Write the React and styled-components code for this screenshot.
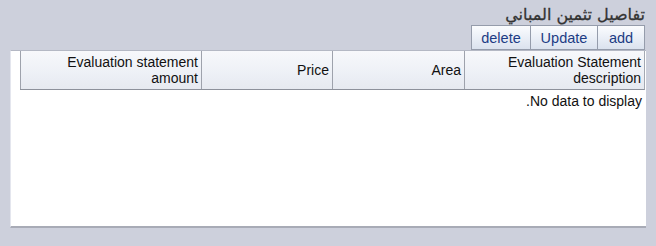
import React from 'react'
import styled, { createGlobalStyle } from 'styled-components'

const GlobalStyle = createGlobalStyle`
    html, body {
        margin: 0;
        padding: 0;
        background: #cdd0dc;
    }
    body {
        font-family: "Liberation Sans", Arial, sans-serif;
    }
`

const Page = styled.div`
    direction: rtl;
    width: 656px;
    height: 246px;
    box-sizing: border-box;
    padding: 4px 10px 0 10px;
    display: flex;
    flex-direction: column;
`

const Title = styled.h1`
    margin: 0;
    height: 21px;
    padding-right: 1px;
    font-family: "DejaVu Sans", sans-serif;
    font-size: 16px;
    font-weight: normal;
    color: #333;
    line-height: 21px;
    -webkit-text-stroke: 0.3px #333;
`

const Toolbar = styled.div`
    display: flex;
    height: 25px;
    padding-right: 1px;
`

const Button = styled.button`
    direction: ltr;
    width: ${p => p.$w}px;
    height: 25px;
    padding: 0;
    margin: 0;
    border: 1px solid #959cab;
    border-right: ${p => (p.$first ? '1px solid #959cab' : 'none')};
    background: linear-gradient(#fbfcfe, #e9eef6 55%, #dbe2ee);
    color: #1c3c84;
    font-family: "Liberation Sans", Arial, sans-serif;
    font-size: 14.5px;
    cursor: pointer;
`

const Panel = styled.div`
    flex: 0 0 178px;
    background: #fff;
    border-top: 1px solid #b4b8c4;
    border-left: 1px solid #e4e6ee;
    border-bottom: 2px solid #a8abb6;
    box-sizing: border-box;
    display: flex;
    flex-direction: column;
    padding-right: 1px;
`

const HeaderRow = styled.div`
    display: flex;
    height: 39px;
    margin-left: 9px;
    border-bottom: 1px solid #8d919b;
    border-right: 1px solid #a4a8b2;
    background: linear-gradient(#f7f8fb, #edf0f6 60%, #e6e9f0);
    box-sizing: border-box;
`

const HeaderCell = styled.div`
    flex: ${p => (p.$grow ? '1 1 auto' : `0 0 ${p.$w}px`)};
    box-sizing: border-box;
    border-left: 1px solid #9ea2ac;
    padding: 0 3px 0 4px;
    display: flex;
    align-items: center;
    direction: ltr;
    text-align: right;
    font-size: 14px;
    line-height: 16px;
    color: #111;

    & > span {
        margin-left: auto;
    }
`

const Empty = styled.div`
    padding: 3px 3px 0 0;
    font-size: 14px;
    color: #111;
`

export default function App() {
    const columns = [
        { label: 'Evaluation Statement description', w: 180 },
        { label: 'Area', w: 132 },
        { label: 'Price', w: 131 },
        { label: 'Evaluation statement amount', w: 182, grow: true },
    ]
    return (
        <>
            <GlobalStyle />
            <Page>
                <Title>تفاصيل تثمين المباني</Title>
                <Toolbar>
                    <Button $first $w={48}>add</Button>
                    <Button $w={67}>Update</Button>
                    <Button $w={59}>delete</Button>
                </Toolbar>
                <Panel>
                    <HeaderRow>
                        {columns.map(c => (
                            <HeaderCell key={c.label} $w={c.w} $grow={c.grow}>
                                <span>{c.label}</span>
                            </HeaderCell>
                        ))}
                    </HeaderRow>
                    <Empty>No data to display.</Empty>
                </Panel>
            </Page>
        </>
    )
}
